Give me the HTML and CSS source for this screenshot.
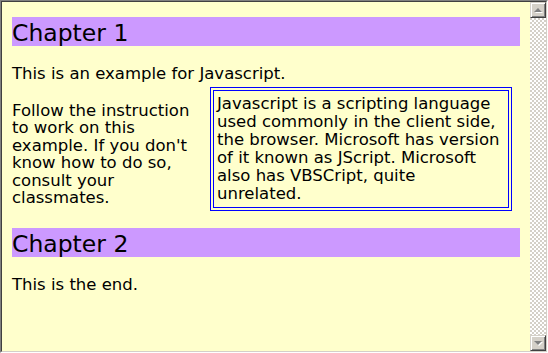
FILE: index.html
```html
<!DOCTYPE html>
<html lang="en">
<head>
    <meta charset="UTF-8">
    <title>Chapters</title>
    <link rel="stylesheet" href="styles.css">
</head>
<body>
    <div class="window">
        <div class="frame">
            <div class="page">
                <h1 class="chapter">Chapter 1</h1>
                <p class="intro">This is an example for Javascript.</p>
                <div class="row">
                    <p class="note">Follow the instruction to work on this example. If you don't know how to do so, consult your classmates.</p>
                    <div class="aside">Javascript is a scripting language used commonly in the client side, the browser. Microsoft has version of it known as JScript. Microsoft also has VBSCript, quite unrelated.</div>
                </div>
                <h1 class="chapter chapter-next">Chapter 2</h1>
                <p class="outro">This is the end.</p>
            </div>
            <div class="scrollbar">
                <div class="scroll-btn"><span class="arrow up"></span></div>
                <div class="track"></div>
                <div class="scroll-btn"><span class="arrow down"></span></div>
            </div>
        </div>
    </div>
</body>
</html>
```

FILE: styles.css
```css
body {
    margin: 0;
    font-family: 'DejaVu Sans', Verdana, sans-serif;
    color: #000000;
}

/* sunken browser frame */
.window {
    width: 548px;
    height: 353px;
    box-sizing: border-box;
    border-top: 1px solid #808080;
    border-left: 1px solid #808080;
    border-right: 1px solid #ffffff;
    border-bottom: 1px solid #ffffff;
}

.frame {
    height: 100%;
    box-sizing: border-box;
    display: flex;
    border-top: 1px solid #404040;
    border-left: 1px solid #404040;
    border-right: 1px solid #d4d0c8;
    border-bottom: 1px solid #d4d0c8;
}

.page {
    flex: 1;
    background-color: #ffffcc;
    padding: 15px 10px 0 10px;
    overflow: hidden;
    font-size: 16.5px;
}

.chapter {
    margin: 0;
    padding-top: 3px;
    font-size: 23.5px;
    line-height: 26px;
    font-weight: normal;
    background-color: #cc99ff;
}

.chapter-next {
    margin-top: 17px;
}

.intro {
    margin: 19px 0 0;
    line-height: 17.5px;
}

.row {
    display: flex;
    align-items: flex-start;
    gap: 10px;
    margin-top: 4px;
}

.note {
    flex: 0 0 188px;
    margin: 15px 0 0;
    line-height: 17.5px;
}

.aside {
    flex: 0 0 302px;
    box-sizing: border-box;
    border: 4px double #0000ff;
    padding: 4px 7px 4px 3px;
    line-height: 18px;
}

.outro {
    margin: 19px 0 0;
    line-height: 17.5px;
}

/* classic scrollbar */
.scrollbar {
    width: 16px;
    display: flex;
    flex-direction: column;
}

.scroll-btn {
    width: 16px;
    height: 16px;
    box-sizing: border-box;
    background-color: #d4d0c8;
    border: 1px solid;
    border-color: #d4d0c8 #404040 #404040 #d4d0c8;
    box-shadow: inset 1px 1px #ffffff, inset -1px -1px #808080;
    display: flex;
    justify-content: center;
    align-items: center;
}

.arrow {
    width: 0;
    height: 0;
    border-left: 4px solid transparent;
    border-right: 4px solid transparent;
    filter: drop-shadow(1px 1px 0 #ffffff);
}

.arrow.up {
    border-bottom: 4px solid #808080;
    margin-top: -1px;
}

.arrow.down {
    border-top: 4px solid #808080;
}

.track {
    flex: 1;
    background: repeating-conic-gradient(#ffffff 0 25%, #d4d0c8 0 50%) 0 0 / 4px 4px;
}
```
